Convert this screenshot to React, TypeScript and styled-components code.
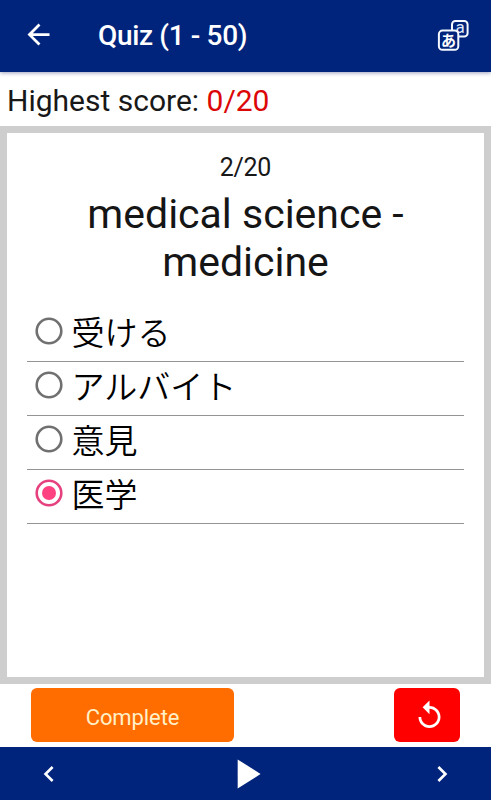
import React, { useState } from "react";
import styled, { createGlobalStyle } from "styled-components";

const GlobalStyle = createGlobalStyle`
  * { box-sizing: border-box; }
  body { margin: 0; background: #fff; font-family: Roboto, "Noto Sans CJK JP", sans-serif; }
  button { border: 0; padding: 0; background: none; font: inherit; color: inherit; }
`;

const Screen = styled.div`
  width: 100%;
  height: 100vh;
  display: flex;
  flex-direction: column;
  overflow: hidden;
  background: #fff;
`;

const AppBar = styled.header`
  flex: 0 0 72px;
  display: flex;
  align-items: center;
  padding: 0 20px 3px 22px;
  background: #00247c;
  color: #fff;
  box-shadow: 0 1px 4px rgba(0, 20, 90, 0.4);
`;

const IconButton = styled.button`
  display: flex;
  align-items: center;
  justify-content: center;
`;

const Title = styled.h1`
  flex: 1;
  margin: 3px 0 0 43px;
  font-size: 28px;
  line-height: 34px;
  font-weight: 500;
  letter-spacing: -0.35px;
`;

const Score = styled.p`
  flex: 0 0 54px;
  margin: 0;
  padding: 4px 7px 0;
  font-size: 30px;
  line-height: 50px;
  color: #181818;
  white-space: pre;
`;

const ScoreValue = styled.span`
  color: #dc0808;
`;

const Card = styled.main`
  flex: 0 0 558px;
  border: 7px solid #cecece;
  padding: 19px 20px 0;
`;

const Progress = styled.div`
  font-size: 25px;
  line-height: 32px;
  letter-spacing: -0.3px;
  text-align: center;
  color: #181818;
`;

const Question = styled.h2`
  margin: 6px 0 0;
  padding: 0 40px;
  font-size: 41px;
  line-height: 48px;
  font-weight: 400;
  text-align: center;
  color: #151515;
`;

const Options = styled.div`
  margin-top: 22px;
`;

const Option = styled.button`
  display: flex;
  align-items: center;
  width: 100%;
  height: 54px;
  padding: 0 0 8px 8px;
  border-bottom: 1px solid #949494;
`;

const OptionText = styled.span`
  margin: 0 0 0 8.5px;
  font-family: "Noto Sans CJK JP", sans-serif;
  font-size: 33px;
  line-height: 44px;
  font-weight: 350;
  color: #000;
`;

const Actions = styled.div`
  flex: 0 0 63px;
  display: flex;
  justify-content: space-between;
  align-items: flex-start;
  padding: 4px 31px 0;
`;

const ActionButton = styled.button<{ $tone: "complete" | "restart" }>`
  display: flex;
  align-items: center;
  justify-content: center;
  width: ${(p) => (p.$tone === "complete" ? "203px" : "66px")};
  height: 54px;
  padding-top: ${(p) => (p.$tone === "complete" ? "4px" : "1px")};
  padding-left: ${(p) => (p.$tone === "complete" ? "0" : "4px")};
  border-radius: 6px;
  background: ${(p) => (p.$tone === "complete" ? "#ff6d00" : "#fe0000")};
  color: ${(p) => (p.$tone === "complete" ? "#fff0c8" : "#fff")};
  font-size: 22px;
  letter-spacing: -0.1px;
`;

const BottomNav = styled.nav`
  flex: 1;
  display: flex;
  align-items: center;
  justify-content: space-between;
  padding: 0 33px;
  background: #00247c;
  color: #fff;
`;

type GlyphProps = { d: string; size: number };

const Glyph = ({ d, size }: GlyphProps) => (
  <svg width={size} height={size} viewBox="0 0 24 24" fill="currentColor">
    <path d={d} />
  </svg>
);

const icons = {
  back: "M20 11H7.83l5.59-5.59L12 4l-8 8 8 8 1.41-1.41L7.83 13H20v-2z",
  previous: "M15.41 7.41L14 6l-6 6 6 6 1.41-1.41L10.83 12z",
  next: "M10 6L8.59 7.41 13.17 12l-4.58 4.59L10 18l6-6z",
  play: "M8 5v14l11-7z",
  replay:
    "M12 5V1L7 6l5 5V7c3.31 0 6 2.69 6 6s-2.69 6-6 6-6-2.69-6-6H4c0 4.42 3.58 8 8 8s8-3.58 8-8-3.58-8-8-8z",
};

const RadioMark = ({ checked }: { checked: boolean }) => (
  <svg width="28" height="28" viewBox="0 0 28 28" fill="none">
    <circle cx="14" cy="14" r="12.3" stroke={checked ? "#e5417f" : "#707070"} strokeWidth="2.6" />
    {checked && <circle cx="14" cy="14" r="7" fill="#ff4081" />}
  </svg>
);

const TranslateIcon = () => (
  <svg width="34" height="34" viewBox="0 0 34 34" overflow="visible" fill="none" stroke="#f4f8ff" strokeWidth="2">
    <rect x="15" y="3" width="15.6" height="15.6" rx="3.4" />
    <text x="23" y="15.4" fontFamily="Roboto, sans-serif" fontSize="17" textAnchor="middle" fill="#dfe8fa" stroke="none">
      a
    </text>
    <rect x="1.9" y="12.6" width="19.4" height="19.2" rx="3.6" fill="#00247c" />
    <text x="11.6" y="27.6" fontFamily="Noto Sans CJK JP, sans-serif" fontSize="15" fontWeight="700" textAnchor="middle" fill="#fff" stroke="none">
      あ
    </text>
  </svg>
);

const answers = ["受ける", "アルバイト", "意見", "医学"];

export default function App() {
  const [selected, setSelected] = useState(3);

  return (
    <Screen>
      <GlobalStyle />
      <AppBar>
        <IconButton aria-label="Back">
          <Glyph d={icons.back} size={33} />
        </IconButton>
        <Title>Quiz (1 - 50)</Title>
        <IconButton aria-label="Translate">
          <TranslateIcon />
        </IconButton>
      </AppBar>
      <Score>
        Highest score: <ScoreValue>0/20</ScoreValue>
      </Score>
      <Card>
        <Progress>2/20</Progress>
        <Question>medical science - medicine</Question>
        <Options role="radiogroup">
          {answers.map((answer, i) => (
            <Option key={answer} role="radio" aria-checked={i === selected} onClick={() => setSelected(i)}>
              <RadioMark checked={i === selected} />
              <OptionText>{answer}</OptionText>
            </Option>
          ))}
        </Options>
      </Card>
      <Actions>
        <ActionButton $tone="complete">Complete</ActionButton>
        <ActionButton $tone="restart" aria-label="Restart">
          <Glyph d={icons.replay} size={33} />
        </ActionButton>
      </Actions>
      <BottomNav>
        <IconButton aria-label="Previous">
          <Glyph d={icons.previous} size={32} />
        </IconButton>
        <IconButton aria-label="Play">
          <Glyph d={icons.play} size={50} />
        </IconButton>
        <IconButton aria-label="Next">
          <Glyph d={icons.next} size={32} />
        </IconButton>
      </BottomNav>
    </Screen>
  );
}
